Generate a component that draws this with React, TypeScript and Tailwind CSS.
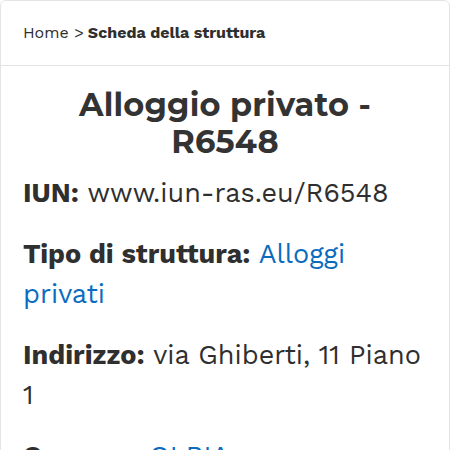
import React from "react";

const fields = [
  { label: "IUN:", value: "www.iun-ras.eu/R6548", link: false },
  { label: "Tipo di struttura:", value: "Alloggi privati", link: true },
  { label: "Indirizzo:", value: "via Ghiberti, 11 Piano 1", link: false },
  { label: "Comune:", value: "OLBIA", link: true },
];

export default function App() {
  return (
    <div className="w-[450px] h-[450px] overflow-hidden bg-white font-['Work_Sans','Inter',sans-serif] text-[#2f2f2f]">
      <div className="border border-[#e4e4e4] rounded-md">
        {/* breadcrumb */}
        <div className="h-[65px] px-[22px] flex items-center border-b border-[#e4e4e4] text-[16px]">
          <span>Home &gt; </span>
          <span className="font-bold ml-1">Scheda della struttura</span>
        </div>

        <div className="px-[22px] pt-[20px] pb-[40px]">
          <h1 className="text-center text-[32px] leading-[37px] font-bold text-[#333] font-['Montserrat','Inter',sans-serif] tracking-[0.2px]">
            Alloggio privato -<br />R6548
          </h1>

          <div className="mt-[13px] flex flex-col gap-[21px]">
            {fields.map((f) => (
              <p key={f.label} className="text-[27px] leading-[40px]">
                <span className="font-bold">{f.label}</span>{" "}
                {f.link ? (
                  <a href="#" className="text-[#0b6bbf]">
                    {f.value}
                  </a>
                ) : (
                  <span>{f.value}</span>
                )}
              </p>
            ))}
          </div>
        </div>
      </div>
    </div>
  );
}
